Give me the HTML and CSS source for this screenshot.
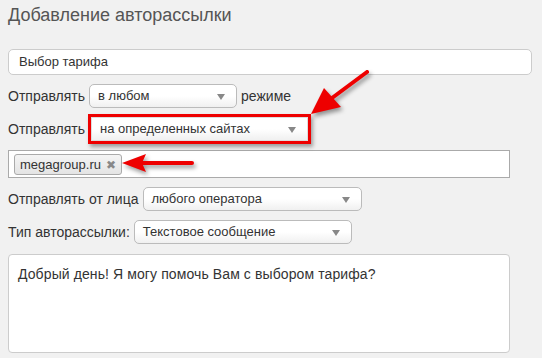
FILE: index.html
```html
<!DOCTYPE html>
<html lang="ru">
<head>
    <meta charset="UTF-8">
    <title>Добавление авторассылки</title>
    <link rel="stylesheet" href="styles.css">
</head>
<body>
    <h2 class="title">Добавление авторассылки</h2>
    <div class="form">
        <div class="text-input">Выбор тарифа</div>
        <div class="row">
            <span class="label">Отправлять</span>
            <div class="select select-mode">в любом<span class="caret"></span></div>
            <span class="label">режиме</span>
        </div>
        <div class="row">
            <span class="label">Отправлять</span>
            <div class="select select-sites marked">на определенных сайтах<span class="caret"></span></div>
        </div>
        <div class="tags">
            <span class="tag">megagroup.ru <span class="tag-x">✖</span></span>
        </div>
        <div class="row">
            <span class="label">Отправлять от лица</span>
            <div class="select select-op">любого оператора<span class="caret"></span></div>
        </div>
        <div class="row">
            <span class="label">Тип авторассылки:</span>
            <div class="select select-type">Текстовое сообщение<span class="caret"></span></div>
        </div>
        <div class="textarea">Добрый день! Я могу помочь Вам с выбором тарифа?</div>
    </div>

    <svg class="arrow arrow-big" width="80" height="60" viewBox="0 0 80 60">
        <line x1="67" y1="5" x2="32" y2="31" stroke="#ee0000" stroke-width="4" stroke-linecap="round"/>
        <polygon points="11,47 24,21 41,40" fill="#ee0000"/>
    </svg>
    <svg class="arrow arrow-small" width="80" height="24" viewBox="0 0 80 24">
        <line x1="20" y1="11" x2="72" y2="11" stroke="#ee0000" stroke-width="4" stroke-linecap="round"/>
        <polygon points="2,11 26,2 22,11 26,20" fill="#ee0000"/>
    </svg>
</body>
</html>
```

FILE: styles.css
```css
body {
    margin: 0;
    padding: 0 8px;
    background-color: #f1f1f1;
    font-family: "Liberation Sans", Arial, sans-serif;
    color: #333333;
    position: relative;
    height: 358px;
    overflow: hidden;
}
.title {
    margin: 0;
    padding-top: 4px;
    height: 45px;
    font-size: 18px;
    font-weight: normal;
    line-height: 22px;
    color: #555555;
}
.form {
    display: flex;
    flex-direction: column;
    gap: 9px;
}
.text-input {
    height: 26px;
    box-sizing: border-box;
    width: 524px;
    padding: 0 10px;
    background-color: #ffffff;
    border: 1px solid #cccccc;
    border-radius: 5px;
    font-size: 13px;
    line-height: 24px;
}
.row {
    display: flex;
    align-items: center;
    gap: 4px;
    height: 24px;
    font-size: 14px;
}
.label {
    white-space: nowrap;
}
.select {
    position: relative;
    box-sizing: border-box;
    height: 24px;
    padding: 0 8px;
    border: 1px solid #bbbbbb;
    border-radius: 5px;
    background: linear-gradient(#ffffff 50%, #f0f0f0);
    font-size: 13px;
    line-height: 22px;
}
.caret {
    position: absolute;
    right: 11px;
    top: 9px;
    width: 0;
    height: 0;
    border-left: 4px solid transparent;
    border-right: 4px solid transparent;
    border-top: 6px solid #888888;
}
.select-mode {
    width: 148px;
}
.select-sites {
    width: 217px;
    margin-left: 2px;
    border-radius: 0;
    border-color: #dddddd;
}
.marked {
    box-shadow: 0 0 0 3px #ee0000, 2px 3px 4px 3px rgba(0, 0, 0, 0.35);
}
.select-op {
    width: 219px;
}
.select-type {
    width: 218px;
}
.tags {
    box-sizing: border-box;
    width: 502px;
    height: 28px;
    padding: 3px 5px;
    background-color: #ffffff;
    border: 1px solid #aaaaaa;
}
.tag {
    display: inline-block;
    box-sizing: border-box;
    height: 21px;
    padding: 0 5px;
    border: 1px solid #aaaaaa;
    border-radius: 3px;
    background: linear-gradient(#f4f4f4, #e4e4e4);
    font-size: 13px;
    line-height: 19px;
}
.tag-x {
    color: #888888;
    font-size: 12px;
    margin-left: 1px;
}
.textarea {
    box-sizing: border-box;
    width: 502px;
    height: 99px;
    margin-top: 1px;
    padding: 11px 9px;
    background-color: #ffffff;
    border: 1px solid #cccccc;
    border-radius: 4px;
    font-size: 14px;
    letter-spacing: 0.1px;
}
.arrow {
    position: absolute;
    filter: drop-shadow(2px 3px 2px rgba(0, 0, 0, 0.4));
}
.arrow-big {
    left: 300px;
    top: 67px;
}
.arrow-small {
    left: 120px;
    top: 152px;
}
```
